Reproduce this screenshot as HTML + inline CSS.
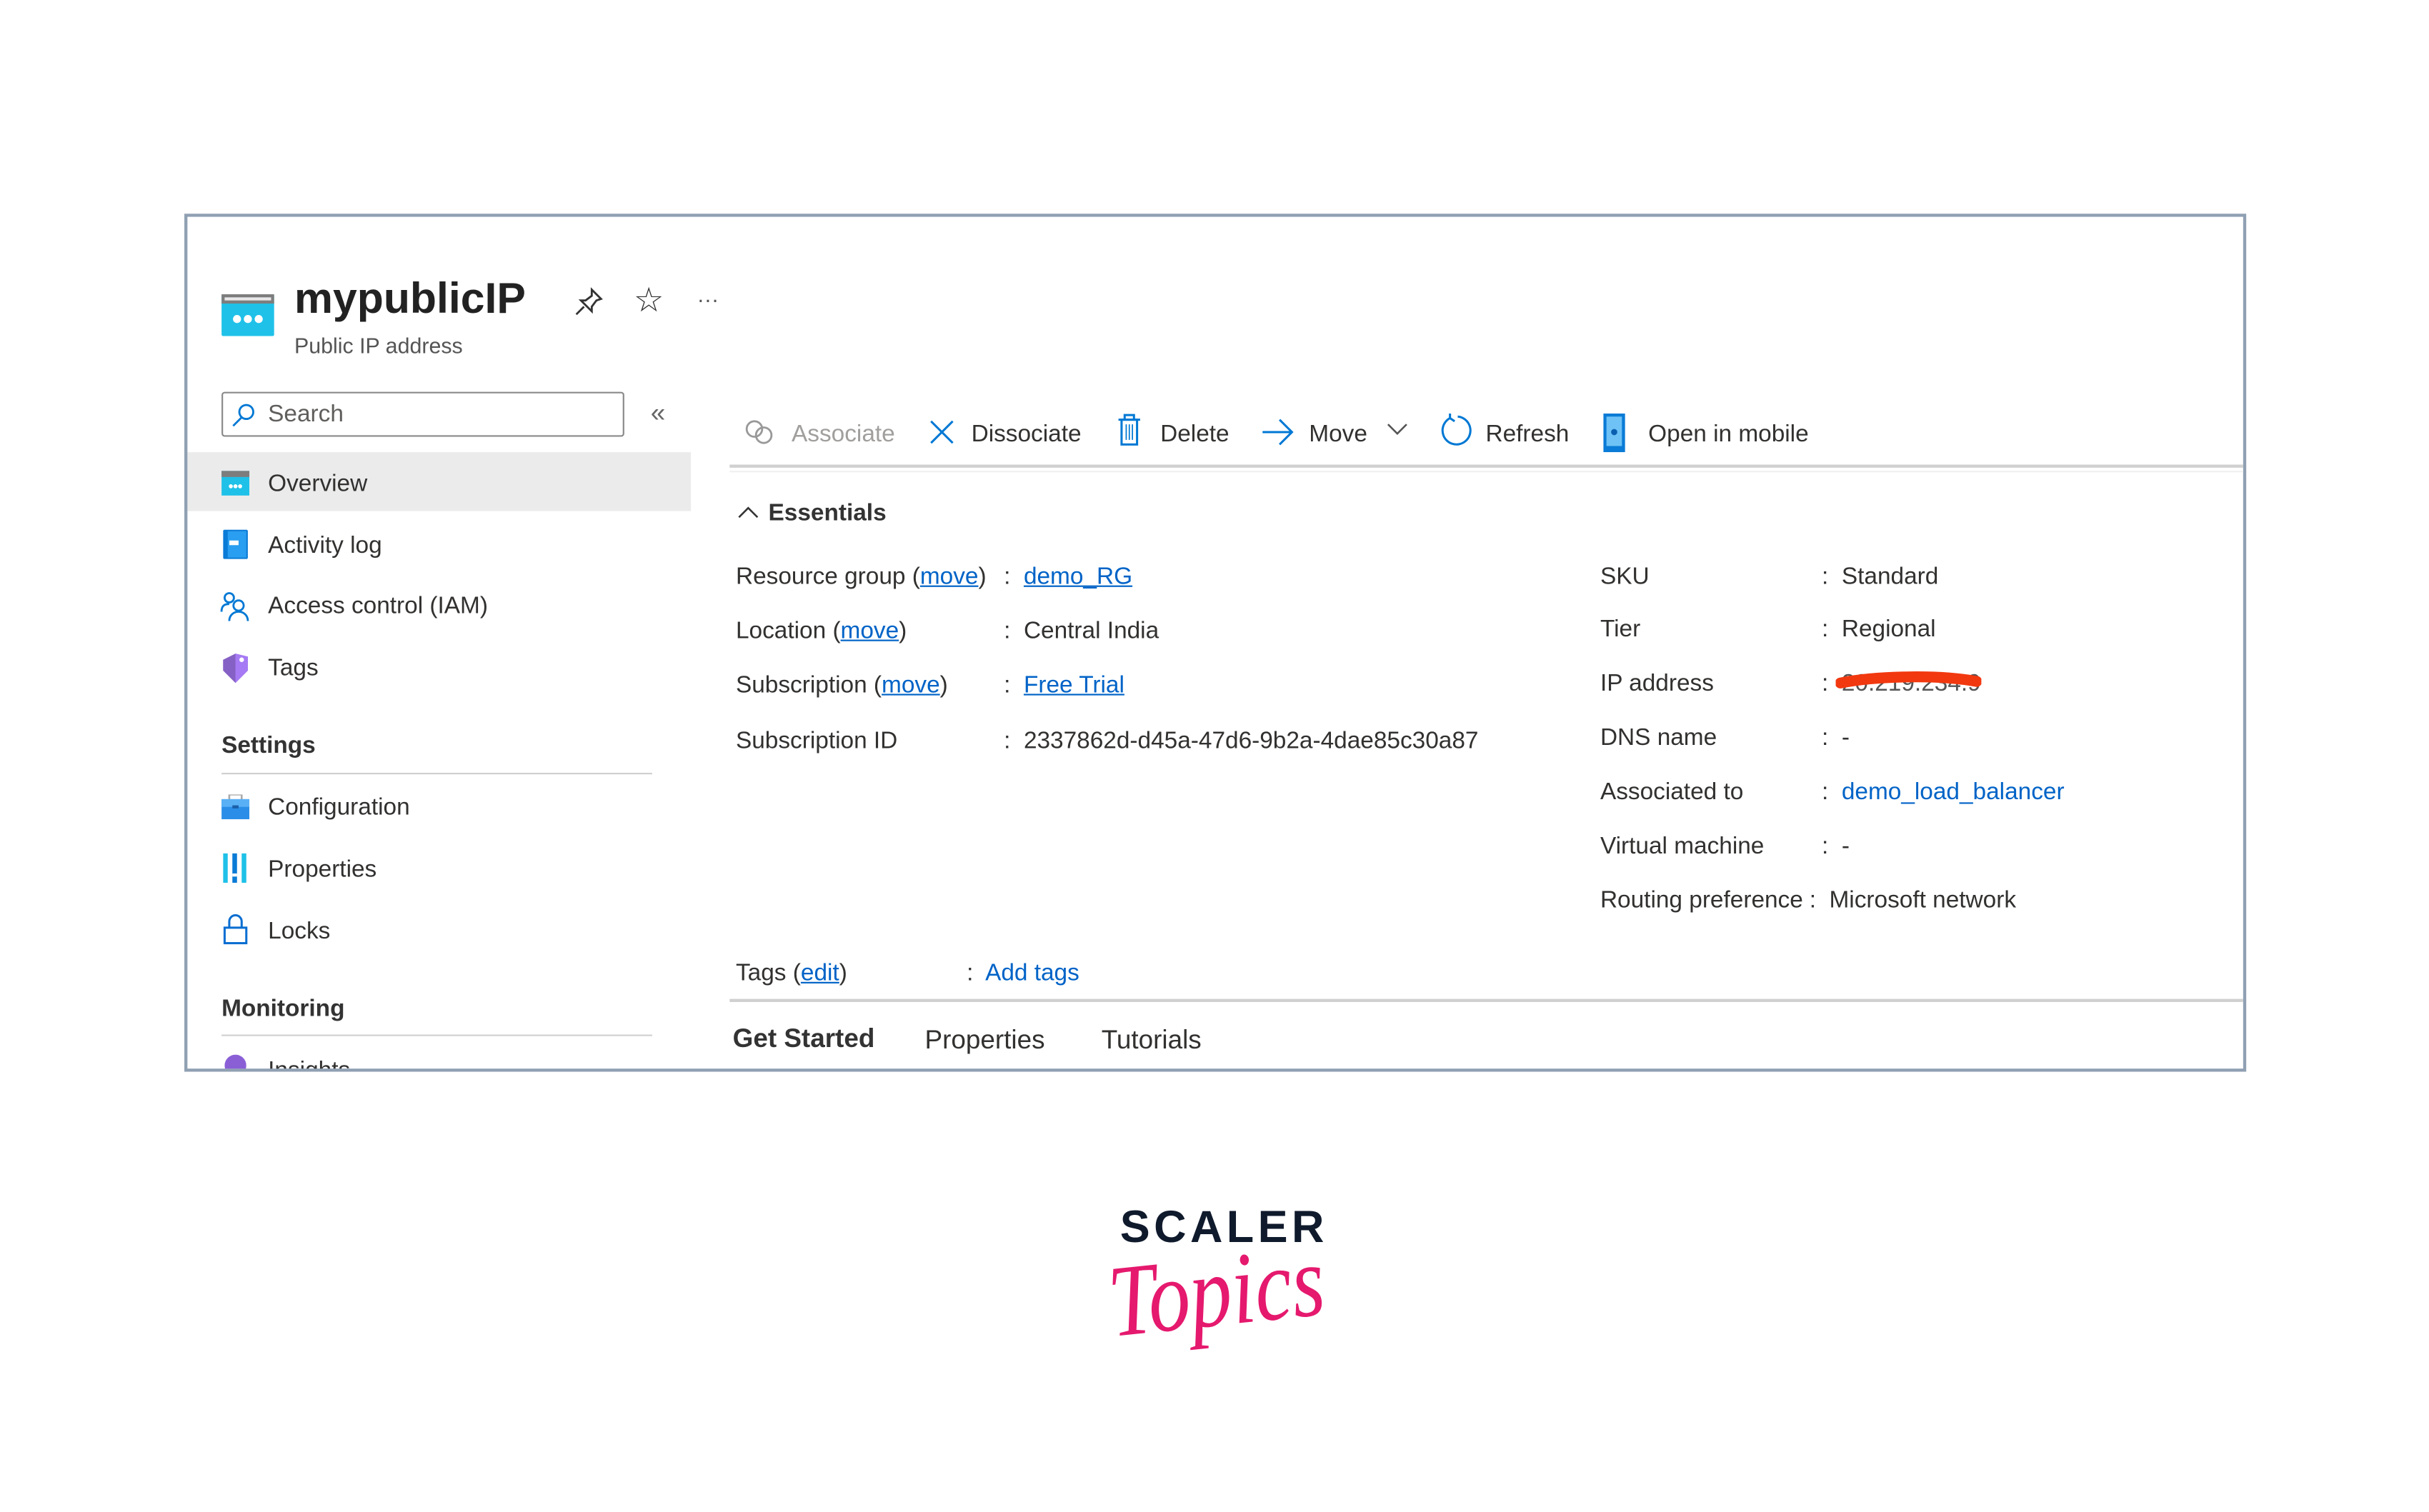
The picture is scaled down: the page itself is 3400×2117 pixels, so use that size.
<!DOCTYPE html>
<html><head><meta charset="utf-8"><style>
html,body{margin:0;padding:0;background:#fff;overflow:hidden}
body{width:3400px;height:2117px;position:relative}
#s{position:absolute;left:0;top:0;width:1568px;height:977px;transform:scale(2.1684);transform-origin:0 0;font-family:"Liberation Sans",sans-serif;color:#323130}
.a{position:absolute;white-space:nowrap}
.t{font-size:15.4px;line-height:18px}
.l{color:#0063c7;text-decoration:underline}
.lb{color:#0063c7}
.hr{position:absolute;height:2px;background:#d0d0d0}
</style></head><body><div id="s">
<div class="a" style="left:119px;top:138px;width:1327px;height:550px;border:2px solid #90a0b3;overflow:hidden"></div>
<div class="a" style="left:121px;top:140px;width:1327px;height:550px;overflow:hidden">
<div style="position:relative;left:-121px;top:-140px">
<svg class="a" style="left:143px;top:190px" width="34" height="27"><rect width="34" height="27" rx="1" fill="#1fc1e8"/><rect x="0" y="0" width="34" height="6" fill="#7d7d7d"/><rect x="2" y="2" width="30" height="2" fill="#e8e8e8"/><circle cx="10" cy="16" r="2.6" fill="#fff"/><circle cx="17" cy="16" r="2.6" fill="#fff"/><circle cx="24" cy="16" r="2.6" fill="#fff"/></svg>
<div class="a" style="left:190px;top:175px;font-size:28px;line-height:36px;font-weight:bold;color:#222">mypublicIP</div>
<div class="a" style="left:190px;top:215px;font-size:14px;line-height:17px;color:#555">Public IP address</div>
<svg class="a" style="left:370px;top:185px" width="20" height="20" fill="none" stroke="#333" stroke-width="1.3"><path d="M12 2l6 6-3 1-3 4 0 3-7-7 3 0 4-3zM7 13l-5 5"/></svg>
<div class="a" style="left:409px;top:181px;font-size:22px;color:#333">☆</div>
<div class="a" style="left:450px;top:185px;font-size:14px;color:#555">···</div>
<div class="a" style="left:143px;top:253px;width:258px;height:27px;border:1px solid #8a8a8a;border-radius:2px"></div>
<svg class="a" style="left:149px;top:260px" width="16" height="16" fill="none" stroke="#0078d4" stroke-width="1.3"><circle cx="10" cy="6" r="4.5"/><path d="M7 9.5l-5.5 5.5"/></svg>
<div class="a t" style="left:173px;top:259px;color:#605e5c">Search</div>
<div class="a" style="left:420px;top:257px;font-size:17px;color:#666">«</div>
<div class="a" style="left:121px;top:292px;width:325px;height:38px;background:#ebebeb"></div>
<svg class="a" style="left:143px;top:304px" width="18" height="16"><rect width="18" height="16" fill="#1fc1e8"/><rect width="18" height="4" fill="#7d7d7d"/><circle cx="6" cy="10" r="1.3" fill="#fff"/><circle cx="9" cy="10" r="1.3" fill="#fff"/><circle cx="12" cy="10" r="1.3" fill="#fff"/></svg>
<div class="a t" style="left:173px;top:304px">Overview</div>
<svg class="a" style="left:144px;top:342px" width="16" height="19"><rect width="16" height="19" rx="1" fill="#0a7bd6"/><rect x="3" y="1" width="12" height="17" fill="#2a9ef0"/><rect x="4" y="7" width="6" height="3" fill="#fff"/></svg>
<div class="a t" style="left:173px;top:344px">Activity log</div>
<svg class="a" style="left:142px;top:381px" width="20" height="20" fill="none" stroke="#0078d4" stroke-width="1.3"><circle cx="6" cy="5" r="3"/><path d="M1 14c0-4 2-5 5-5"/><circle cx="12" cy="10" r="3.3"/><path d="M6 20c0-4 3-6 6-6s6 2 6 6"/></svg>
<div class="a t" style="left:173px;top:383px">Access control (IAM)</div>
<svg class="a" style="left:143px;top:421px" width="18" height="20"><path d="M9 1l8 2 0 9-8 8-8-8 0-7z" fill="#8661c5"/><path d="M9 1l8 2 0 9-8 8z" fill="#a67af4"/><circle cx="13" cy="5" r="1.5" fill="#fff"/></svg>
<div class="a t" style="left:173px;top:423px">Tags</div>
<div class="a t" style="left:143px;top:473px;font-weight:bold;color:#333">Settings</div>
<div class="hr" style="left:143px;top:499px;width:278px;height:1px"></div>
<svg class="a" style="left:143px;top:513px" width="18" height="16"><rect x="5" y="0" width="8" height="4" fill="none" stroke="#aaa" stroke-width="1.2"/><rect y="3" width="18" height="13" fill="#2a8ee8"/><rect y="3" width="18" height="5" fill="#5ab0f5"/><rect x="7" y="7" width="4" height="2" fill="#1a5fa8"/></svg>
<div class="a t" style="left:173px;top:513px">Configuration</div>
<svg class="a" style="left:144px;top:551px" width="16" height="19"><rect x="0" width="3" height="19" fill="#1fc1e8"/><rect x="6" width="3" height="19" fill="#0a7bd6"/><rect x="12" width="3" height="19" fill="#1fc1e8"/><rect x="6" y="13" width="3" height="2" fill="#fff"/></svg>
<div class="a t" style="left:173px;top:553px">Properties</div>
<svg class="a" style="left:144px;top:590px" width="16" height="20" fill="none" stroke="#0a6ed1" stroke-width="1.4"><path d="M4 9V5a4 4 0 0 1 8 0v4"/><rect x="1" y="9" width="14" height="10"/></svg>
<div class="a t" style="left:173px;top:593px">Locks</div>
<div class="a t" style="left:143px;top:643px;font-weight:bold;color:#333">Monitoring</div>
<div class="hr" style="left:143px;top:668px;width:278px;height:1px"></div>
<svg class="a" style="left:145px;top:681px" width="14" height="14"><circle cx="7" cy="7" r="7" fill="#8a5fd6"/></svg>
<div class="a t" style="left:173px;top:683px">Insights</div>
<svg class="a" style="left:480px;top:270px" width="22" height="18" fill="none" stroke="#999" stroke-width="1.3"><circle cx="7" cy="7" r="5"/><circle cx="13" cy="11" r="5"/></svg>
<div class="a t" style="left:511px;top:272px;color:#a19f9d">Associate</div>
<svg class="a" style="left:599px;top:270px" width="18" height="18" stroke="#0078d4" stroke-width="1.4"><path d="M2 2l14 14M16 2L2 16"/></svg>
<div class="a t" style="left:627px;top:272px">Dissociate</div>
<svg class="a" style="left:721px;top:267px" width="16" height="22" fill="none" stroke="#0078d4" stroke-width="1.4"><path d="M1 4h14M5 4V1h6v3"/><rect x="3" y="4" width="10" height="16"/><path d="M6 7v10M8 7v10M10 7v10" stroke-width="0.8"/></svg>
<div class="a t" style="left:749px;top:272px">Delete</div>
<svg class="a" style="left:814px;top:269px" width="22" height="20" fill="none" stroke="#0078d4" stroke-width="1.4"><path d="M1 10h19M12 2l8 8-8 8"/></svg>
<div class="a t" style="left:845px;top:272px">Move</div>
<svg class="a" style="left:895px;top:272px" width="14" height="10" fill="none" stroke="#555" stroke-width="1.2"><path d="M1 2l6 6 6-6"/></svg>
<svg class="a" style="left:929px;top:267px" width="22" height="22" fill="none" stroke="#0078d4" stroke-width="1.4"><path d="M7 3a9 9 0 1 0 5-1M7 3V0M7 3l3 2"/></svg>
<div class="a t" style="left:959px;top:272px">Refresh</div>
<svg class="a" style="left:1035px;top:267px" width="16" height="25"><rect width="14" height="25" fill="#0a7bd6"/><rect x="2" y="2" width="10" height="19" fill="#6ec2f5"/><circle cx="7" cy="12" r="2" fill="#0a5fb0"/></svg>
<div class="a t" style="left:1064px;top:272px">Open in mobile</div>
<div class="hr" style="left:471px;top:300px;width:980px;height:2px"></div>
<div class="hr" style="left:471px;top:304px;width:980px;height:1px;background:#f0f0f0"></div>
<svg class="a" style="left:476px;top:326px" width="14" height="10" fill="none" stroke="#333" stroke-width="1.2"><path d="M1 8l6-6 6 6"/></svg>
<div class="a t" style="left:496px;top:323px;font-weight:bold;color:#333">Essentials</div>
<div class="a t" style="left:475px;top:364px">Resource group (<span class="l">move</span>)</div>
<div class="a t" style="left:475px;top:399px">Location (<span class="l">move</span>)</div>
<div class="a t" style="left:475px;top:434px">Subscription (<span class="l">move</span>)</div>
<div class="a t" style="left:475px;top:470px">Subscription ID</div>
<div class="a t" style="left:648px;top:364px">:&nbsp; <span class="l">demo_RG</span></div>
<div class="a t" style="left:648px;top:399px">:&nbsp; Central India</div>
<div class="a t" style="left:648px;top:434px">:&nbsp; <span class="l">Free Trial</span></div>
<div class="a t" style="left:648px;top:470px">:&nbsp; 2337862d-d45a-47d6-9b2a-4dae85c30a87</div>
<div class="a t" style="left:1033px;top:364px">SKU</div>
<div class="a t" style="left:1033px;top:398px">Tier</div>
<div class="a t" style="left:1033px;top:433px">IP address</div>
<div class="a t" style="left:1033px;top:468px">DNS name</div>
<div class="a t" style="left:1033px;top:503px">Associated to</div>
<div class="a t" style="left:1033px;top:538px">Virtual machine</div>
<div class="a t" style="left:1033px;top:573px">Routing preference</div>
<div class="a t" style="left:1176px;top:364px">:&nbsp; Standard</div>
<div class="a t" style="left:1176px;top:398px">:&nbsp; Regional</div>
<div class="a t" style="left:1176px;top:433px">:&nbsp; <span style="color:#555">20.219.234.9</span></div>
<svg class="a" style="left:1185px;top:433px" width="94" height="16"><path d="M3 8c20-4 60-6 88-1" stroke="#f2380f" stroke-width="7" fill="none" stroke-linecap="round"/></svg>
<div class="a t" style="left:1176px;top:468px">:&nbsp; -</div>
<div class="a t" style="left:1176px;top:503px">:&nbsp; <span class="lb">demo_load_balancer</span></div>
<div class="a t" style="left:1176px;top:538px">:&nbsp; -</div>
<div class="a t" style="left:1168px;top:573px">:&nbsp; Microsoft network</div>
<div class="a t" style="left:475px;top:620px">Tags (<span class="l">edit</span>)</div>
<div class="a t" style="left:624px;top:620px">:&nbsp; <span class="lb">Add tags</span></div>
<div class="hr" style="left:471px;top:645px;width:980px;height:2px"></div>
<div class="a" style="left:473px;top:661px;font-size:17px;line-height:20px;font-weight:bold;color:#333">Get Started</div>
<div class="a" style="left:597px;top:662px;font-size:17px;line-height:20px">Properties</div>
<div class="a" style="left:711px;top:662px;font-size:17px;line-height:20px">Tutorials</div>
</div></div>
<div class="a" style="left:723px;top:776px;font-size:29px;line-height:34px;font-weight:bold;letter-spacing:2.5px;color:#0f1a2c">SCALER</div>
<div class="a" style="left:716px;top:806px;font-size:66px;line-height:72px;font-style:italic;font-family:'Liberation Serif',serif;color:#e5196e;transform:rotate(-6deg) scaleX(0.82);transform-origin:0 50%">Topics</div>
</div></body></html>
